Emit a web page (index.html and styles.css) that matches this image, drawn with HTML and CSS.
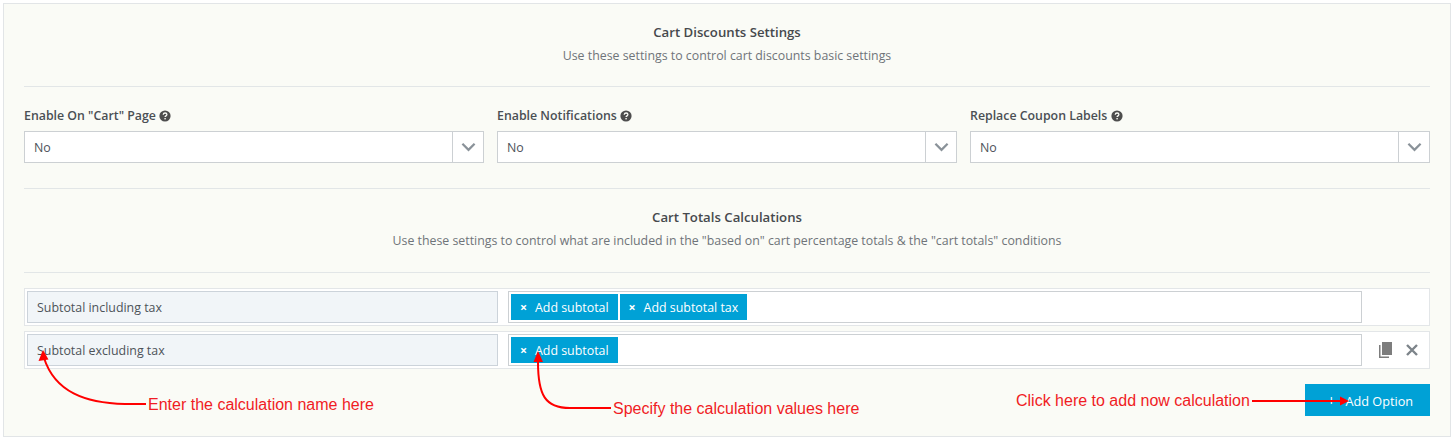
FILE: index.html
```html
<!DOCTYPE html>
<html lang="en">
<head>
<meta charset="utf-8">
<title>Cart Discounts Settings</title>
<link rel="stylesheet" href="styles.css">
</head>
<body>
<main class="panel">
  <header class="section-head first">
    <h2>Cart Discounts Settings</h2>
    <p>Use these settings to control cart discounts basic settings</p>
  </header>
  <section class="fields">
    <div class="field">
      <label>Enable On "Cart" Page <svg class="help" viewBox="0 0 12 12"><circle cx="6" cy="6" r="5.6" fill="#4d4d4d"/><path d="M4.2 4.7c.1-1.1.9-1.7 1.900-1.700s1.800.6 1.800 1.500c0 1.400-1.800 1.300-1.800 2.600" fill="none" stroke="#fafbf6" stroke-width="1.3"/><rect x="5.4" y="8" width="1.4" height="1.4" fill="#fafbf6"/></svg></label>
      <div class="select"><span class="value">No</span><span class="arrow"><svg viewBox="0 0 16 10"><path d="M1.500 1.500 8 8l6.500-6.500" fill="none" stroke="#8a9299" stroke-width="2.400"/></svg></span></div>
    </div>
    <div class="field">
      <label>Enable Notifications <svg class="help" viewBox="0 0 12 12"><circle cx="6" cy="6" r="5.6" fill="#4d4d4d"/><path d="M4.2 4.7c.1-1.1.9-1.7 1.900-1.700s1.800.6 1.800 1.500c0 1.400-1.800 1.300-1.800 2.600" fill="none" stroke="#fafbf6" stroke-width="1.3"/><rect x="5.4" y="8" width="1.4" height="1.4" fill="#fafbf6"/></svg></label>
      <div class="select"><span class="value">No</span><span class="arrow"><svg viewBox="0 0 16 10"><path d="M1.500 1.500 8 8l6.500-6.500" fill="none" stroke="#8a9299" stroke-width="2.400"/></svg></span></div>
    </div>
    <div class="field">
      <label>Replace Coupon Labels <svg class="help" viewBox="0 0 12 12"><circle cx="6" cy="6" r="5.6" fill="#4d4d4d"/><path d="M4.2 4.7c.1-1.1.9-1.7 1.900-1.700s1.800.6 1.800 1.500c0 1.400-1.800 1.300-1.800 2.600" fill="none" stroke="#fafbf6" stroke-width="1.3"/><rect x="5.4" y="8" width="1.4" height="1.4" fill="#fafbf6"/></svg></label>
      <div class="select"><span class="value">No</span><span class="arrow"><svg viewBox="0 0 16 10"><path d="M1.500 1.500 8 8l6.500-6.500" fill="none" stroke="#8a9299" stroke-width="2.400"/></svg></span></div>
    </div>
  </section>
  <header class="section-head second">
    <h2>Cart Totals Calculations</h2>
    <p>Use these settings to control what are included in the "based on" cart percentage totals &amp; the "cart totals" conditions</p>
  </header>
  <section class="rows">
    <div class="row">
      <div class="name">Subtotal including tax</div>
      <div class="tags">
        <span class="tag"><span class="x">×</span>Add subtotal</span>
        <span class="tag"><span class="x">×</span>Add subtotal tax</span>
      </div>
      <div class="actions"></div>
    </div>
    <div class="row">
      <div class="name">Subtotal excluding tax</div>
      <div class="tags">
        <span class="tag"><span class="x">×</span>Add subtotal</span>
      </div>
      <div class="actions">
        <svg class="copy" viewBox="0 0 13 16"><path d="M0 3h1.500v11.500H10V16H0z" fill="#7d7d7d"/><rect x="3" y="0" width="10" height="13" fill="#7d7d7d"/></svg>
        <svg class="close" viewBox="0 0 12 12"><path d="M1 1l10 10M11 1 1 11" stroke="#7d848a" stroke-width="2.400" fill="none"/></svg>
      </div>
    </div>
  </section>
  <div class="foot">
    <button class="add" type="button"><span class="plus">+</span>Add Option</button>
  </div>
  <svg class="arrows" viewBox="0 0 1454 440" aria-hidden="true">
    <g fill="none" stroke="#f00" stroke-width="2">
      <path d="M146 404H125C85 403 55 392 44 358"/>
      <path d="M611 408H570C545 408 538 395 538 362"/>
      <path d="M1252 401H1340"/>
    </g>
    <g fill="#f00">
      <path d="M43 350l5.500 9.500-10 1.500z"/>
      <path d="M538 351l5 11h-9.500z"/>
      <path d="M1349 401l-9-4.500v9z"/>
    </g>
  </svg>
  <span class="note n1">Enter the calculation name here</span>
  <span class="note n2">Specify the calculation values here</span>
  <span class="note n3">Click here to add now calculation</span>
</main>
</body>
</html>
```
FILE: styles.css
```css
* { box-sizing: border-box; }
html, body { background: #fff; }
body {
  margin: 3px 0 0 3px;
  font-family: "Open Sans", "Liberation Sans", sans-serif;
  font-size: 12.4px;
  color: #4d5359;
}
.panel {
  position: relative;
  width: 1448px;
  height: 434px;
  padding: 0 20px;
  background: #fafbf6;
  border: 1px solid #e2e5e7;
}
.section-head { text-align: center; border-bottom: 1px solid #e2e6e7; }
.section-head.first { height: 83px; padding-top: 19px; }
.section-head.second { height: 84px; padding-top: 19px; }
h2 { margin: 0; font-size: 13.2px; line-height: 18px; font-weight: 600; color: #46494d; }
p { margin: 6px 0 0; font-size: 12.35px; line-height: 18px; color: #6f7479; }
.fields {
  display: grid;
  grid-template-columns: repeat(3, 460px);
  column-gap: 13px;
  height: 102px;
  padding-top: 20px;
  border-bottom: 1px solid #e2e6e7;
}
label { display: block; height: 24px; line-height: 18px; font-size: 12.35px; font-weight: 600; color: #4a4f54; }
.help { width: 12px; height: 12px; vertical-align: -1.500px; }
.select { display: flex; height: 32px; background: #fff; border: 1px solid #ccd0d3; }
.value { flex: 1; padding-left: 9px; line-height: 31px; }
.arrow { width: 31px; border-left: 1px solid #ccd0d3; display: flex; align-items: center; justify-content: center; }
.arrow svg { width: 15px; height: 10px; }
.rows { display: flex; flex-direction: column; gap: 5px; padding-top: 15px; }
.row { display: flex; align-items: center; height: 38px; padding: 0 2px; background: #fff; border: 1px solid #e3e6e8; }
.name { width: 471px; height: 32px; padding-left: 9px; line-height: 31px; background: #f1f5f8; border: 1px solid #ccd3da; }
.tags { display: flex; gap: 2px; align-items: center; width: 854px; height: 32px; margin-left: 10px; padding-left: 2px; background: #fff; border: 1px solid #ccd0d3; }
.tag { height: 26px; padding: 0 9px; line-height: 27px; color: #fff; background: #00a1d6; white-space: nowrap; }
.x { display: inline-block; width: 15px; font-weight: 700; }
.actions { flex: 1; display: flex; align-items: center; gap: 14px; padding-left: 17px; }
.copy { width: 13px; height: 16px; }
.close { width: 12px; height: 12px; }
.foot { display: flex; justify-content: flex-end; padding-top: 15px; }
.add { width: 125px; height: 32px; border: 0; padding: 0 0 0 5px; background: #00a1d6; color: #fff; font: 12.7px "Open Sans", "Liberation Sans", sans-serif; }
.plus { margin-right: 10px; font-size: 15px; }
.arrows { position: absolute; left: -4px; top: -4px; width: 1454px; height: 440px; pointer-events: none; }
.note { position: absolute; font-family: "Liberation Sans", Arial, sans-serif; font-size: 16px; line-height: 18px; color: #f01c24; white-space: nowrap; }
.n1 { left: 144px; top: 392px; }
.n2 { left: 609px; top: 396px; }
.n3 { left: 1012px; top: 388px; }
```
